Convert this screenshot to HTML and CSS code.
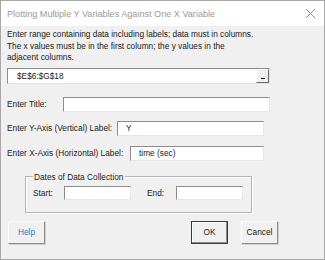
FILE: index.html
```html
<!DOCTYPE html>
<html lang="en">
<head>
    <meta charset="UTF-8">
    <title>Plotting Multiple Y Variables Against One X Variable</title>
    <link rel="stylesheet" href="styles.css">
</head>
<body>
    <div class="window">
        <div class="titlebar">
            <span class="title">Plotting Multiple Y Variables Against One X Variable</span>
            <svg class="close" width="11" height="11" viewBox="0 0 11 11">
                <path d="M1 1 L10 10 M10 1 L1 10" stroke="#8a8a8a" stroke-width="1" fill="none"/>
            </svg>
        </div>

        <div class="content">
            <p class="intro">Enter range containing data including labels; data must in columns.<br>
            The x values must be in the first column; the y values in the<br>
            adjacent columns.</p>

            <div class="range-box">
                <span class="range-text">$E$6:$G$18</span>
                <span class="range-btn"></span>
            </div>

            <div class="row row-title">
                <label class="lbl-title">Enter Title:</label>
                <div class="field field-title"></div>
            </div>

            <div class="row row-y">
                <label class="lbl-y">Enter Y-Axis (Vertical) Label:</label>
                <div class="field field-y">Y</div>
            </div>

            <div class="row row-x">
                <label class="lbl-x">Enter X-Axis (Horizontal) Label:</label>
                <div class="field field-x">time (sec)</div>
            </div>

            <fieldset class="dates">
                <legend>Dates of Data Collection</legend>
                <div class="dates-row">
                    <label class="lbl-start">Start:</label>
                    <div class="field field-date"></div>
                    <label class="lbl-end">End:</label>
                    <div class="field field-date"></div>
                </div>
            </fieldset>

            <div class="buttons">
                <button class="btn btn-help">Help</button>
                <button class="btn btn-ok">OK</button>
                <button class="btn btn-cancel">Cancel</button>
            </div>
        </div>
    </div>
</body>
</html>
```

FILE: styles.css
```css
* {
    margin: 0;
    padding: 0;
    box-sizing: border-box;
}

body {
    font-family: "Liberation Sans", Arial, sans-serif;
    font-size: 8.3px;
    color: #1a1a1a;
    background: #f0f0f0;
}

.window {
    width: 325px;
    height: 260px;
    border: 1px solid #a8a8a8;
    background: #f0f0f0;
}

.titlebar {
    height: 25px;
    background: #ffffff;
    display: flex;
    align-items: center;
    justify-content: space-between;
    padding: 0 8px 0 6px;
}

.title {
    font-size: 9.1px;
    color: #9a9a9a;
}

.content {
    padding: 3px 0 0 6px;
}

.intro {
    line-height: 11.5px;
}

.range-box {
    margin-top: 4px;
    width: 263px;
    height: 16px;
    background: #fff;
    border-top: 1px solid #8c8c8c;
    border-left: 1px solid #8c8c8c;
    border-right: 1px solid #e0e0e0;
    border-bottom: 1px solid #e0e0e0;
    display: flex;
    align-items: center;
    justify-content: space-between;
}

.range-text {
    padding-left: 9px;
}

.range-btn {
    position: relative;
    width: 13px;
    height: 14px;
    background: #f0f0f0;
    border-top: 1px solid #fff;
    border-left: 1px solid #fff;
    border-right: 1px solid #6a6a6a;
    border-bottom: 1px solid #6a6a6a;
}

/* the small dash inside the collapse button */
.range-btn::after {
    content: "";
    position: absolute;
    left: 4px;
    bottom: 3px;
    width: 4px;
    height: 1px;
    background: #1a1a1a;
}

.row {
    display: flex;
    align-items: center;
}

.row-title {
    margin-top: 13px;
}

.row-y {
    margin-top: 9px;
}

.row-x {
    margin-top: 10px;
}

.lbl-title {
    width: 56px;
}

.lbl-y {
    width: 110px;
}

.lbl-x {
    width: 123px;
}

.field {
    height: 15px;
    background: #fff;
    border-top: 1px solid #8c8c8c;
    border-left: 1px solid #8c8c8c;
    border-right: 1px solid #e6e6e6;
    border-bottom: 1px solid #e6e6e6;
    padding-left: 8px;
    line-height: 13px;
}

.field-title {
    width: 207px;
}

.field-y {
    width: 147px;
}

.field-x {
    width: 134px;
}

.dates {
    margin: 11px 0 0 18px;
    width: 227px;
    height: 41px;
    border: 1px solid #b4b4b4;
    box-shadow: inset 1px 1px 0 #fff, 1px 1px 0 #fff;
    padding: 0 7px;
}

.dates legend {
    padding: 0 2px 0 1px;
    font-size: 8.3px;
    line-height: 10px;
}

.dates-row {
    display: flex;
    align-items: center;
    margin-top: 4px;
}

.lbl-start {
    width: 31px;
}

.lbl-end {
    width: 29px;
    margin-left: 16px;
}

.field-date {
    width: 67px;
    height: 14px;
}

.buttons {
    display: flex;
    margin-top: 8px;
    padding-left: 1px;
    padding-right: 46px;
}

.btn {
    font-family: inherit;
    font-size: 8.3px;
    height: 23px;
    width: 37px;
    background: #f0f0f0;
    border-top: 1px solid #fff;
    border-left: 1px solid #fff;
    border-right: 1px solid #8a8a8a;
    border-bottom: 1px solid #8a8a8a;
    box-shadow: 1px 1px 0 #d0d0d0;
    color: #1a1a1a;
}

.btn-help {
    color: #2a7ad5;
}

.btn-ok {
    margin-left: auto;
    border: 1px solid #3a3a3a;
    box-shadow: inset -1px -1px 0 #8a8a8a, inset 1px 1px 0 #fff;
}

.btn-cancel {
    margin-left: 13px;
}
```
